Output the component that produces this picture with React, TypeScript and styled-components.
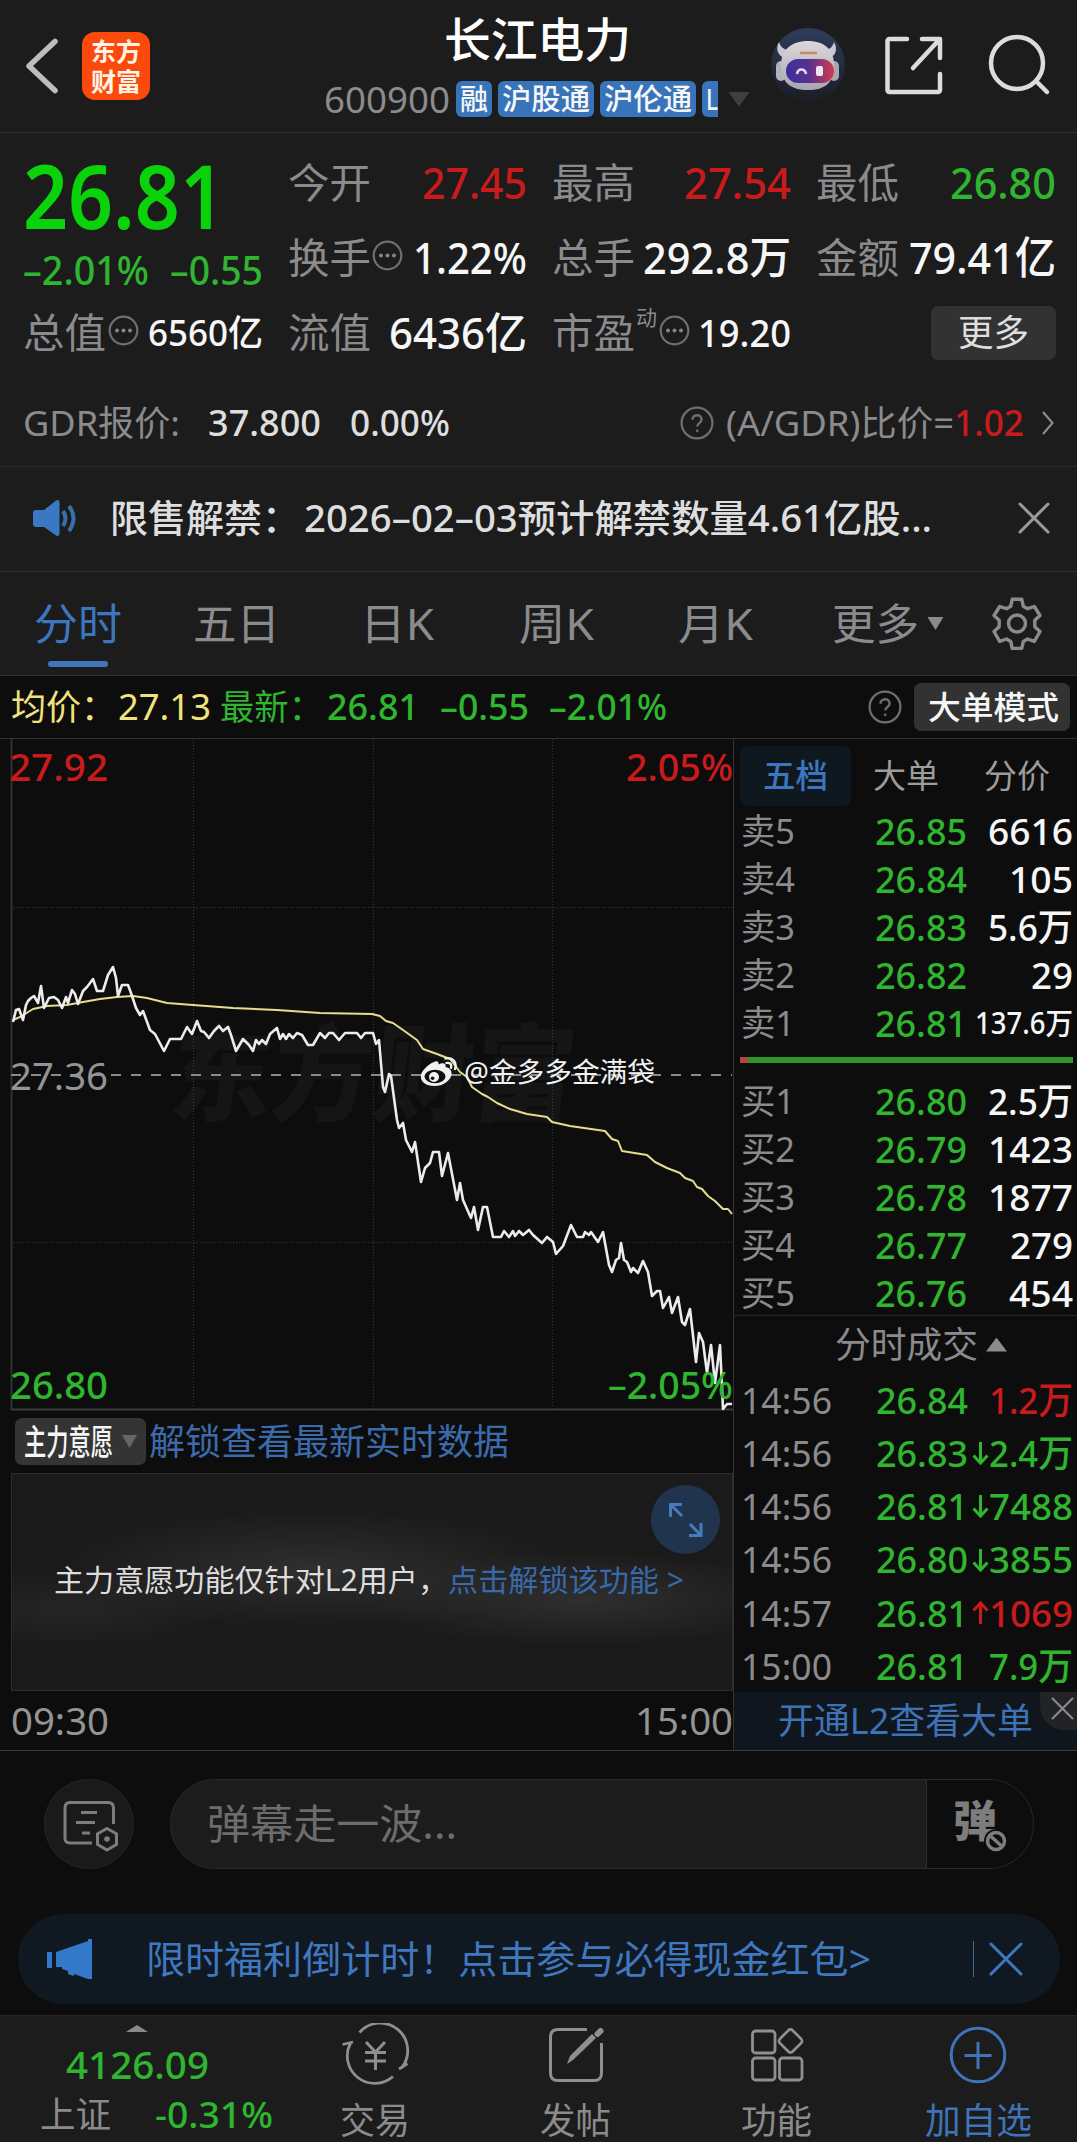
import React, { useLayoutEffect, useRef, useState } from "react";
import styled, { createGlobalStyle, css } from "styled-components";

const c = {
  panel: "#1c1c1c",
  page: "#0d0d0d",
  line: "#323232",
  grey: "#8b8b8d",
  white: "#f6f6f6",
  soft: "#dedede",
  green: "#2fb52f",
  red: "#c91a1c",
  blue: "#3c76bf",
  yellow: "#f1e27c",
};

const GlobalStyle = createGlobalStyle`
  * { box-sizing: border-box; }
  body { margin: 0; background: ${c.page}; font-family: "Noto Sans", "Noto Sans CJK SC", sans-serif; }
`;

/* ---------- text that is squeezed or stretched into its slot ---------- */
const Slot = styled.span<{ $w: number; $ml: number; $size: number; $color: string; $weight: number; $lh: number }>`
  display: block;
  flex: none;
  width: ${(p) => p.$w}px;
  margin-left: ${(p) => p.$ml}px;
  font-size: ${(p) => p.$size}px;
  line-height: ${(p) => p.$lh};
  font-weight: ${(p) => p.$weight};
  color: ${(p) => p.$color};
  white-space: pre;
`;
const Glyphs = styled.span`
  display: inline-block;
  transform-origin: 0 50%;
  vertical-align: top;
`;

type FitProps = { w: number; size: number; color?: string; ml?: number; weight?: number; lh?: number; children: React.ReactNode };
function Fit({ w, size, color = c.white, ml = 0, weight, lh = 1.2, children }: FitProps) {
  const ref = useRef<HTMLSpanElement>(null);
  const [scale, setScale] = useState(1);
  const defaultWeight = color === c.white || color === c.soft || color === c.green || color === c.red ? 500 : 400;
  useLayoutEffect(() => {
    if (ref.current) setScale(w / ref.current.getBoundingClientRect().width);
  }, []);
  return (
    <Slot $w={w} $ml={ml} $size={size} $color={color} $weight={weight ?? defaultWeight} $lh={lh}>
      <Glyphs ref={ref} style={{ transform: `scaleX(${scale})` }}>{children}</Glyphs>
    </Slot>
  );
}

/* ---------- page ---------- */
const Page = styled.main`
  width: 1077px;
  height: 2142px;
  overflow: hidden;
  background: ${c.page};
  display: flex;
  flex-direction: column;
`;

/* ---------- header ---------- */
const Header = styled.header`
  height: 133px;
  flex: none;
  background: ${c.panel};
  border-bottom: 1px solid ${c.line};
  display: grid;
  grid-template-columns: 324px 429px 1fr;
`;
const HeaderLeft = styled.div`
  display: flex;
  align-items: flex-start;
  padding: 32px 0 0 24px;
  gap: 23px;
`;
const Logo = styled.div`
  width: 68px;
  height: 68px;
  border-radius: 13px;
  background: #fb4a0b;
  color: #fff3e6;
  display: flex;
  flex-direction: column;
  align-items: center;
  justify-content: center;
  font-size: 25px;
  line-height: 30px;
  font-weight: 700;
`;
const HeaderMid = styled.div`
  display: flex;
  flex-direction: column;
  padding-top: 11px;
`;
const TitleRow = styled.div`
  height: 56px;
  padding-left: 120px;
  display: flex;
  align-items: center;
`;
const CodeRow = styled.div`
  display: flex;
  align-items: center;
  height: 64px;
`;
const Chips = styled.div`
  display: flex;
  gap: 6px;
  width: 262px;
  margin-left: 6px;
`;
const Chip = styled.span<{ $w: number; $cut?: boolean }>`
  flex: none;
  width: ${(p) => p.$w}px;
  height: 36px;
  border-radius: ${(p) => (p.$cut ? "6px 0 0 6px" : "6px")};
  background: #3874ba;
  display: flex;
  align-items: center;
  padding-left: 4px;
`;
const HeaderRight = styled.div`
  display: flex;
  align-items: flex-start;
  padding: 27px 0 0 17px;
`;
const Triangle = styled.i<{ $w: number; $h: number; $color: string; $up?: boolean; $ml?: number }>`
  flex: none;
  width: ${(p) => p.$w}px;
  height: ${(p) => p.$h}px;
  margin-left: ${(p) => p.$ml ?? 0}px;
  background: ${(p) => p.$color};
  clip-path: ${(p) => (p.$up ? "polygon(50% 0, 100% 100%, 0 100%)" : "polygon(0 0, 100% 0, 50% 100%)")};
`;

/* ---------- quote ---------- */
const Quote = styled.section`
  height: 334px;
  flex: none;
  background: ${c.panel};
  border-bottom: 1px solid #2a2a2a;
`;
const QuoteGrid = styled.div`
  display: grid;
  grid-template-columns: 263px 264px 264px 263px;
  height: 237px;
  padding: 12px 0 0 0;
`;
const QuoteCol = styled.div`
  display: grid;
  grid-template-rows: 75px 75px 75px;
`;
const PriceCol = styled.div`
  display: grid;
  grid-template-rows: 100px 50px 75px;
`;
const Line = styled.div<{ $pl?: number; $top?: number }>`
  display: flex;
  align-items: center;
  padding-left: ${(p) => p.$pl ?? 0}px;
  padding-top: ${(p) => p.$top ?? 0}px;
`;
const Grow = styled.span`
  flex: 1;
`;
const Sup = styled.span`
  align-self: flex-start;
  margin: 9px 0 0 1px;
  width: 23px;
  font-size: 21px;
  line-height: 26px;
  color: ${c.grey};
`;
const MoreButton = styled.button<{ $w: number; $h: number }>`
  border: 0;
  padding: 0;
  font-family: inherit;
  width: ${(p) => p.$w}px;
  height: ${(p) => p.$h}px;
  flex: none;
  border-radius: 7px;
  background: #323232;
  display: flex;
  align-items: center;
  justify-content: center;
`;
const GdrRow = styled.div`
  display: flex;
  align-items: center;
  height: 96px;
  padding: 9px 0 0 23px;
`;

/* ---------- notice ---------- */
const Notice = styled.section`
  height: 105px;
  flex: none;
  background: ${c.panel};
  border-bottom: 1px solid ${c.line};
  display: flex;
  align-items: center;
  padding: 0 0 2px 32px;
`;

/* ---------- period tabs ---------- */
const Tabs = styled.nav`
  height: 104px;
  flex: none;
  background: ${c.panel};
  border-bottom: 1px solid ${c.line};
  display: flex;
`;
const Tab = styled.div<{ $w: number; $active?: boolean }>`
  position: relative;
  width: ${(p) => p.$w}px;
  flex: none;
  display: flex;
  align-items: center;
  justify-content: center;
  ${(p) =>
    p.$active &&
    css`
      &::after {
        content: "";
        position: absolute;
        left: 48px;
        bottom: 8px;
        width: 60px;
        height: 6px;
        border-radius: 3px;
        background: #3f76bb;
      }
    `}
`;
const InfoBar = styled.section`
  height: 63px;
  flex: none;
  border-bottom: 1px solid ${c.line};
  display: flex;
  align-items: center;
  padding: 0 7px 0 11px;
`;

/* ---------- body ---------- */
const Body = styled.section`
  display: grid;
  grid-template-columns: 734px 343px;
  height: 1012px;
  flex: none;
  border-bottom: 1px solid #3a3a3a;
`;
const ChartSide = styled.div`
  border-right: 1px solid #333;
  display: flex;
  flex-direction: column;
`;
const ChartBox = styled.div`
  position: relative;
  height: 672px;
`;
const Over = styled.div<{ $x: number; $y: number }>`
  position: absolute;
  left: ${(p) => p.$x}px;
  top: ${(p) => p.$y}px;
  display: flex;
  align-items: center;
  height: 48px;
  margin-top: -24px;
`;
const Ghost = styled(Over)`
  transform: skewX(-6deg);
`;
const IntentBar = styled.div`
  height: 62px;
  display: flex;
  align-items: center;
  padding: 0 0 1px 15px;
`;
const IntentButton = styled.div`
  width: 131px;
  height: 47px;
  border-radius: 7px;
  background: #343434;
  display: flex;
  align-items: center;
  padding-left: 9px;
`;
const LockPanel = styled.div`
  position: relative;
  margin-left: 11px;
  height: 218px;
  border: 1px solid #2d2d2d;
  background:
    radial-gradient(ellipse 260px 60px at 300px 95px, #2f2f2f, transparent),
    radial-gradient(ellipse 230px 48px at 570px 125px, #2f2f2f, transparent),
    radial-gradient(ellipse 150px 40px at 60px 135px, #262626, transparent),
    #1a1a1a;
  display: flex;
  align-items: center;
  padding: 0 0 4px 42px;
`;
const ExpandButton = styled.div`
  position: absolute;
  right: 12px;
  top: 11px;
  width: 69px;
  height: 69px;
  border-radius: 50%;
  background: #20344e;
`;
const TimeAxis = styled.div`
  flex: 1;
  display: flex;
  align-items: center;
  justify-content: space-between;
  padding: 0 0 0 11px;
`;

/* ---------- order book ---------- */
const Book = styled.div`
  display: flex;
  flex-direction: column;
`;
const BookTabs = styled.div`
  height: 68px;
  display: flex;
  align-items: center;
  padding: 5px 0 0 6px;
`;
const BookTab = styled.div`
  width: 111px;
  height: 60px;
  border-radius: 8px;
  background: #10181f;
  display: flex;
  align-items: center;
  justify-content: center;
`;
const Row = styled.div<{ $h: number; $top?: number }>`
  height: ${(p) => p.$h}px;
  flex: none;
  display: flex;
  align-items: center;
  padding: ${(p) => p.$top ?? 0}px 4px 0 7px;
`;
const RatioBar = styled.div`
  height: 6px;
  flex: none;
  margin: 10px 4px 14px 6px;
  background: linear-gradient(90deg, #b8433c 6px, #2b962b 10px);
`;
const DealHead = styled.div`
  height: 58px;
  flex: none;
  border-top: 1px solid #262626;
  margin-top: -2px;
  display: flex;
  align-items: center;
  padding-left: 101px;
`;
const L2Bar = styled.div`
  position: relative;
  flex: 1;
  background: #10161d;
  display: flex;
  align-items: center;
  padding-left: 44px;
`;
const L2Close = styled.div`
  position: absolute;
  right: 0;
  top: 0;
  width: 37px;
  height: 38px;
  border-bottom-left-radius: 24px;
  background: #212327;
`;

/* ---------- lower area ---------- */
const Danmu = styled.section`
  height: 163px;
  flex: none;
  display: flex;
  align-items: flex-start;
  padding: 28px 0 0 44px;
  gap: 36px;
`;
const RoundButton = styled.div`
  width: 90px;
  height: 90px;
  border-radius: 50%;
  background: #1a1a1a;
  border: 1px solid #262626;
`;
const InputPill = styled.div`
  width: 864px;
  height: 90px;
  border-radius: 45px;
  border: 1px solid #2a2a2a;
  background: #1c1c1c;
  overflow: hidden;
  display: flex;
`;
const Placeholder = styled.div`
  width: 756px;
  display: flex;
  align-items: center;
  padding-left: 36px;
  border-right: 1px solid #2a2a2a;
`;
const DanmuToggle = styled.div`
  position: relative;
  flex: 1;
  background: #0d0d0d;
  padding: 15px 0 0 26px;
`;
const BanIcon = styled.svg`
  position: absolute;
  left: 57px;
  top: 49px;
`;
const Promo = styled.section`
  width: 1042px;
  height: 90px;
  flex: none;
  margin: 0 0 11px 18px;
  border-radius: 45px;
  background: #101921;
  display: flex;
  align-items: center;
  padding-left: 28px;
`;
const Rule = styled.i`
  width: 1px;
  height: 36px;
  margin-left: 102px;
  background: #47698f;
`;
const TabBar = styled.footer`
  flex: 1;
  background: #1c1c1c;
  border-top: 1px solid #262626;
  display: grid;
  grid-template-columns: 274px 201px 201px 201px 202px;
`;
const IndexCell = styled.div`
  display: flex;
  flex-direction: column;
  padding: 9px 0 0 0;
`;
const IndexLine = styled.div<{ $pl: number; $h: number }>`
  display: flex;
  align-items: center;
  height: ${(p) => p.$h}px;
  padding-left: ${(p) => p.$pl}px;
`;
const NavItem = styled.div`
  display: flex;
  flex-direction: column;
  align-items: center;
  padding-top: 7px;
  gap: 12px;
`;

/* ---------- icons ---------- */
const DotsBox = styled.svg<{ $ml: number }>`
  flex: none;
  margin: -4px 0 0 ${(p) => p.$ml}px;
`;
const Dots = ({ ml = 0 }: { ml?: number }) => (
  <DotsBox $ml={ml} width="31" height="31" viewBox="0 0 31 31">
    <circle cx="15.5" cy="15.5" r="13.8" fill="none" stroke="#6f6f71" strokeWidth="2.2" />
    <g fill="#858587"><circle cx="9" cy="15.5" r="2" /><circle cx="15.5" cy="15.5" r="2" /><circle cx="22" cy="15.5" r="2" /></g>
  </DotsBox>
);
const Icon = styled.svg<{ $ml: number }>`
  flex: none;
  margin-left: ${(p) => p.$ml}px;
`;
const Help = ({ ml }: { ml: number }) => (
  <Icon $ml={ml} width="34" height="34" viewBox="0 0 34 34" fill="none" stroke="#6f6f71" strokeWidth="2.2">
    <circle cx="17" cy="17" r="15.4" />
    <path d="M12.5 13.8c0-2.8 2-4.6 4.6-4.6s4.5 1.7 4.5 4.2c0 3.6-4.4 3.8-4.4 7.2" strokeWidth="2.4" />
    <circle cx="17.2" cy="24.8" r="1" fill="#6f6f71" strokeWidth="1" />
  </Icon>
);
const Cross = ({ size, color, w, ml = 0 }: { size: number; color: string; w: number; ml?: number }) => (
  <Icon $ml={ml} width={size} height={size} viewBox={`0 0 ${size} ${size}`} stroke={color} strokeWidth={w} strokeLinecap="round">
    <path d={`M2 2L${size - 2} ${size - 2}M${size - 2} 2L2 ${size - 2}`} />
  </Icon>
);
const Robot = () => (
  <svg width="76" height="76" viewBox="0 0 76 76">
    <defs>
      <linearGradient id="halo" x1="0" y1="0" x2="0" y2="1"><stop offset="0" stopColor="#303c5c" /><stop offset=".55" stopColor="#222a3d" /><stop offset="1" stopColor="#1b1d24" /></linearGradient>
      <linearGradient id="visor"><stop offset="0" stopColor="#3a2f9c" /><stop offset=".5" stopColor="#5b318f" /><stop offset="1" stopColor="#d23a4c" /></linearGradient>
      <linearGradient id="head" x1="0" y1="0" x2="0" y2="1"><stop offset="0" stopColor="#dcd8da" /><stop offset="1" stopColor="#a9a6b0" /></linearGradient>
    </defs>
    <circle cx="38" cy="38" r="37" fill="url(#halo)" />
    <path d="M9 15c-4 7-1 14 7 17l8-9c-7 1-13-1-15-8zM64 15c4 7 2 14-6 17l-8-9c7 1 12-1 14-8z" fill="#c9c7cf" />
    <rect x="6" y="34" width="10" height="20" rx="5" fill="#b3b1bb" />
    <rect x="59" y="34" width="10" height="20" rx="5" fill="#a9a6b0" />
    <path d="M38 14c17 0 26 9 26 24 0 18-9 25-26 25S11 56 11 38c0-15 10-24 27-24z" fill="url(#head)" />
    <rect x="16" y="32" width="48" height="24" rx="12" fill="url(#visor)" />
    <path d="M27 47c1-6 8-6 9 0" fill="none" stroke="#e5dcf5" strokeWidth="2.500" />
    <rect x="46" y="39" width="7" height="10" rx="2" fill="#f0e3f0" />
    <path d="M30 26h17" stroke="#c4896b" strokeWidth="2.500" />
  </svg>
);

const pricePoints =
  "13,1022 16,1010 19,1009 23,1020 26,1005 28,1001 31,998 34,996 38,1003 41,986 44,1008 49,998 54,997 58,1000 62,1008 66,997 68,1003 72,990 75,994 78,1004 83,991 87,987 93,979 97,991 103,991 108,975 113,967 116,978 118,996 122,985 128,985 131,993 136,1008 140,1015 143,1011 150,1030 155,1034 164,1051 170,1039 181,1039 187,1027 192,1034 197,1021 201,1031 204,1032 209,1038 214,1031 219,1026 223,1031 228,1027 231,1035 236,1051 243,1039 249,1045 253,1051 256,1040 259,1044 262,1040 266,1044 270,1034 277,1028 280,1039 283,1034 286,1039 289,1034 293,1038 297,1033 302,1035 308,1045 313,1045 320,1033 325,1038 329,1033 333,1033 339,1040 345,1033 357,1033 361,1038 365,1033 373,1033 376,1044 379,1040 383,1087 385,1092 389,1074 391,1076 397,1120 399,1128 403,1123 406,1140 412,1152 415,1142 421,1182 425,1168 430,1163 433,1152 439,1152 442,1176 448,1153 457,1200 460,1183 463,1200 471,1218 474,1207 478,1230 483,1207 487,1207 493,1237 501,1237 504,1231 509,1237 513,1231 515,1236 519,1231 523,1235 529,1230 533,1235 542,1243 547,1237 553,1242 556,1254 563,1246 571,1225 577,1237 583,1237 585,1232 589,1235 591,1232 598,1242 603,1232 609,1265 612,1272 616,1260 619,1258 621,1243 624,1260 627,1262 631,1272 633,1268 638,1273 643,1261 648,1272 652,1296 657,1291 660,1291 663,1308 669,1297 672,1313 678,1297 682,1322 685,1325 690,1309 696,1362 699,1333 703,1342 707,1373 711,1345 715,1383 720,1345 723,1409 727,1404 732,1404";
const averagePoints =
  "13,1020 20,1017 25,1014 33,1009 47,1006 67,1005 83,1002 100,999 117,997 133,996 147,998 167,1003 193,1005 233,1008 277,1010 320,1013 372,1014 380,1016 386,1021 393,1023 403,1030 417,1040 423,1049 437,1054 450,1059 460,1072 467,1077 472,1087 482,1094 488,1097 497,1103 510,1109 527,1114 547,1117 552,1122 570,1126 605,1131 612,1139 618,1141 622,1151 647,1155 655,1162 667,1168 680,1173 685,1178 693,1181 697,1187 702,1189 708,1196 715,1201 723,1209 728,1209 732,1214";

const Plot = styled.svg`
  position: relative;
  display: block;
`;
const Chart = () => (
  <Plot width="733" height="672" viewBox="0 739 733 672" fill="none">
    <path d="M11.500 739V1410" stroke="#303030" strokeWidth="2" />
    <path d="M11 1409.500H733" stroke="#3c3c3c" strokeWidth="2" />
    <path d="M193.500 739V1410M373.500 739V1410M552.500 739V1410M11 907.500H733M11 1242.500H733" stroke="#3a3a3a" strokeDasharray="1 2" />
    <path d="M11 1075H732" stroke="#8a8a8a" strokeWidth="2" strokeDasharray="10 10" />
    <polyline points={averagePoints} stroke="#e6dd8e" strokeWidth="2" strokeLinejoin="round" />
    <polyline points={pricePoints} stroke="#ececec" strokeWidth="2.600" strokeLinejoin="round" />
  </Plot>
);

const Weibo = () => (
  <svg width="38" height="32" viewBox="0 0 38 32">
    <path d="M14 6c3-1.500 5-.5 4.500 2.500 4-2 8-1.500 7 2.500 5 1 6.500 4 6 8C30 25 23 30 14.500 30 6 30 .8 26 .8 20.500.8 15 8 8.500 14 6z" fill="#f2f2f2" />
    <ellipse cx="15" cy="20.500" rx="10.500" ry="6.800" fill="#111" />
    <circle cx="14" cy="21" r="5" fill="#f2f2f2" />
    <circle cx="12.600" cy="22.300" r="1.800" fill="#111" />
    <path d="M25.500 2.500c7-2 12 4 9.500 10.500M26.500 7c3.500-.8 5.500 1.500 4.500 4.800" fill="none" stroke="#f2f2f2" strokeWidth="2.300" strokeLinecap="round" />
  </svg>
);

/* ---------- data ---------- */
type Level = [label: string, price: string, volume: string, width: number, size?: number];
const asks: Level[] = [
  ["卖5", "26.85", "6616", 85], ["卖4", "26.84", "105", 64], ["卖3", "26.83", "5.6万", 85],
  ["卖2", "26.82", "29", 42], ["卖1", "26.81", "137.6万", 98, 30],
];
const bids: Level[] = [
  ["买1", "26.80", "2.5万", 85], ["买2", "26.79", "1423", 85], ["买3", "26.78", "1877", 85],
  ["买4", "26.77", "279", 63], ["买5", "26.76", "454", 64],
];
type Deal = [time: string, price: string, dir: "" | "up" | "down", volume: string, color: string];
const deals: Deal[] = [
  ["14:56", "26.84", "", "1.2万", c.red],
  ["14:56", "26.83", "down", "2.4万", c.green],
  ["14:56", "26.81", "down", "7488", c.green],
  ["14:56", "26.80", "down", "3855", c.green],
  ["14:57", "26.81", "up", "1069", c.red],
  ["15:00", "26.81", "", "7.9万", c.green],
];

const LevelRow = ({ level: [label, price, volume, width, size = 37] }: { level: Level }) => (
  <Row $h={48}>
    <Fit w={54} size={35} color={c.grey}>{label}</Fit>
    <Fit w={92} size={37} color={c.green} ml={80}>{price}</Fit>
    <Grow />
    <Fit w={width} size={size}>{volume}</Fit>
  </Row>
);

export default function App() {
  return (
    <Page>
      <GlobalStyle />
      <Header>
        <HeaderLeft>
          <svg width="35" height="68" viewBox="0 0 35 68" fill="none" stroke="#bdbdbd" strokeWidth="5.500" strokeLinecap="round" strokeLinejoin="round">
            <path d="M31 9.500L5 34L31 58.500" />
          </svg>
          <Logo><span>东方</span><span>财富</span></Logo>
        </HeaderLeft>
        <HeaderMid>
          <TitleRow><Fit w={187} size={47} color="#fff" weight={500}>长江电力</Fit></TitleRow>
          <CodeRow>
            <Fit w={126} size={37} color={c.grey}>600900</Fit>
            <Chips>
              <Chip $w={36}><Fit w={28} size={29}>融</Fit></Chip>
              <Chip $w={96}><Fit w={88} size={29}>沪股通</Fit></Chip>
              <Chip $w={96}><Fit w={88} size={29}>沪伦通</Fit></Chip>
              <Chip $w={16} $cut><Fit w={12} size={29}>L</Fit></Chip>
            </Chips>
            <Triangle $w={22} $h={15} $color="#3f3f3f" $ml={10} />
          </CodeRow>
        </HeaderMid>
        <HeaderRight>
          <Robot />
          <Icon $ml={38} width="60" height="76" viewBox="0 0 60 76" fill="none" stroke="#dcdcdc" strokeWidth="4.500" strokeLinecap="round" strokeLinejoin="round">
            <path d="M23 12H5.500a2 2 0 0 0-2 2V63a2 2 0 0 0 2 2H54a2 2 0 0 0 2-2V47M38 12H56V31M55 13L29 41" />
          </Icon>
          <Icon $ml={44} width="64" height="76" viewBox="0 0 64 76" fill="none" stroke="#dcdcdc" strokeWidth="4.500" strokeLinecap="round">
            <circle cx="29" cy="36" r="26" /><path d="M48 54L59 65" />
          </Icon>
        </HeaderRight>
      </Header>

      <Quote>
        <QuoteGrid>
          <PriceCol>
            <Line $pl={23}><Fit w={202} size={88} color="#0bd30b" weight={600} lh={1}>26.81</Fit></Line>
            <Line $pl={23} $top={1}>
              <Fit w={126} size={39} color={c.green}>–2.01%</Fit>
              <Fit w={93} size={39} color={c.green} ml={21}>–0.55</Fit>
            </Line>
            <Line $pl={23}>
              <Fit w={83} size={41} color={c.grey}>总值</Fit><Dots ml={2} />
              <Fit w={115} size={36} ml={9}>6560亿</Fit>
            </Line>
          </PriceCol>
          <QuoteCol>
            <Line $pl={25}><Fit w={83} size={41} color={c.grey}>今开</Fit><Grow /><Fit w={105} size={43} color={c.red}>27.45</Fit></Line>
            <Line $pl={25}><Fit w={83} size={41} color={c.grey}>换手</Fit><Dots ml={1} /><Grow /><Fit w={114} size={44}>1.22%</Fit></Line>
            <Line $pl={25}><Fit w={83} size={41} color={c.grey}>流值</Fit><Grow /><Fit w={138} size={43}>6436亿</Fit></Line>
          </QuoteCol>
          <QuoteCol>
            <Line $pl={25}><Fit w={83} size={41} color={c.grey}>最高</Fit><Grow /><Fit w={107} size={43} color={c.red}>27.54</Fit></Line>
            <Line $pl={25}><Fit w={83} size={41} color={c.grey}>总手</Fit><Grow /><Fit w={148} size={44}>292.8万</Fit></Line>
            <Line $pl={25}><Fit w={83} size={41} color={c.grey}>市盈</Fit><Sup>动</Sup><Dots /><Grow /><Fit w={93} size={38}>19.20</Fit></Line>
          </QuoteCol>
          <QuoteCol>
            <Line $pl={25}><Fit w={83} size={41} color={c.grey}>最低</Fit><Grow /><Fit w={106} size={43} color={c.green}>26.80</Fit></Line>
            <Line $pl={25}><Fit w={83} size={41} color={c.grey}>金额</Fit><Grow /><Fit w={147} size={44}>79.41亿</Fit></Line>
            <Line $pl={140}><MoreButton $w={125} $h={54}><Fit w={71} size={36} color={c.soft} weight={400}>更多</Fit></MoreButton></Line>
          </QuoteCol>
        </QuoteGrid>
        <GdrRow>
          <Fit w={157} size={35} color={c.grey}>GDR报价:</Fit>
          <Fit w={113} size={36} color={c.soft} ml={28}>37.800</Fit>
          <Fit w={100} size={36} color={c.soft} ml={29}>0.00%</Fit>
          <Help ml={230} />
          <Fit w={228} size={35} color={c.grey} ml={12}>(A/GDR)比价=</Fit>
          <Fit w={70} size={36} color={c.red}>1.02</Fit>
          <Icon $ml={17} width="14" height="26" viewBox="0 0 14 26" fill="none" stroke="#8b8b8d" strokeWidth="2.200"><path d="M2 2L11.500 13L2 24" /></Icon>
        </GdrRow>
      </Quote>

      <Notice>
        <svg width="48" height="40" viewBox="0 0 48 40" fill="#3a78c4">
          <path d="M4 12H12L24 2.500Q27 1 27.500 4V36Q27 39 24 37.500L12 29H4Q1 29 1 26V15Q1 12 4 12z" />
          <path d="M31 13Q36 20 31 28M37 8Q46 20 37 33" fill="none" stroke="#3a6fae" strokeWidth="4" />
        </svg>
        <Fit w={190} size={38} color={c.soft} ml={30}>限售解禁：</Fit>
        <Fit w={628} size={38} color={c.soft} ml={4}>2026–02–03预计解禁数量4.61亿股...</Fit>
        <Cross size={32} color="#9a9a9a" w={3} ml={86} />
      </Notice>

      <Tabs>
        <Tab $w={156} $active><Fit w={88} size={43} color={c.blue}>分时</Fit></Tab>
        <Tab $w={160}><Fit w={87} size={43} color={c.grey}>五日</Fit></Tab>
        <Tab $w={162}><Fit w={74} size={43} color={c.grey}>日K</Fit></Tab>
        <Tab $w={157}><Fit w={75} size={43} color={c.grey}>周K</Fit></Tab>
        <Tab $w={161}><Fit w={75} size={43} color={c.grey}>月K</Fit></Tab>
        <Tab $w={183}>
          <Fit w={87} size={43} color={c.grey}>更多</Fit><Triangle $w={16} $h={13} $color={c.grey} $ml={9} />
        </Tab>
        <Icon $ml={10} width="56" height="103" viewBox="0 0 56 103" fill="none" stroke={c.grey} strokeWidth="3.400" strokeLinejoin="round">
          <path d="M23.200 27.300H32.800L34.300 34.300L38.500 36.700L45.300 34.500L51 43.500L45.800 48.300V54.700L51 59.500L45.300 69.300L38.500 67L34.300 69.400L32.800 76.400H23.200L21.700 69.400L17.500 67L10.700 69.300L5 59.500L10.200 54.700V48.300L5 43.500L10.700 34.500L17.500 36.700L21.700 34.300Z" />
          <circle cx="28" cy="51.500" r="8.500" />
        </Icon>
      </Tabs>

      <InfoBar>
        <Fit w={105} size={35} color={c.yellow}>均价：</Fit>
        <Fit w={93} size={36} color={c.yellow} ml={2}>27.13</Fit>
        <Fit w={103} size={35} color={c.green} ml={9} weight={400}>最新：</Fit>
        <Fit w={92} size={36} color={c.green} ml={4}>26.81</Fit>
        <Fit w={89} size={36} color={c.green} ml={21}>–0.55</Fit>
        <Fit w={118} size={36} color={c.green} ml={20}>–2.01%</Fit>
        <Help ml={201} />
        <Grow />
        <MoreButton $w={156} $h={48}><Fit w={131} size={32}>大单模式</Fit></MoreButton>
      </InfoBar>

      <Body>
        <ChartSide>
          <ChartBox>
            <Ghost $x={172} $y={334}><Fit w={416} size={106} color="#151515" weight={900}>东方财富</Fit></Ghost>
            <Chart />
            <Over $x={9} $y={28}><Fit w={99} size={38} color={c.red}>27.92</Fit></Over>
            <Over $x={626} $y={28}><Fit w={107} size={38} color={c.red}>2.05%</Fit></Over>
            <Over $x={10} $y={336}><Fit w={98} size={39} color="#949494">27.36</Fit></Over>
            <Over $x={10} $y={646}><Fit w={98} size={38} color={c.green}>26.80</Fit></Over>
            <Over $x={608} $y={646}><Fit w={125} size={38} color={c.green}>–2.05%</Fit></Over>
            <Over $x={420} $y={333}><Weibo /><Fit w={191} size={27} color="#f2f2f2" ml={6}>@金多多金满袋</Fit></Over>
          </ChartBox>
          <IntentBar>
            <IntentButton><Fit w={89} size={35}>主力意愿</Fit><Triangle $w={15} $h={13} $color="#666" $ml={9} /></IntentButton>
            <Fit w={360} size={36} color="#3b6bab" ml={3}>解锁查看最新实时数据</Fit>
          </IntentBar>
          <LockPanel>
            <Fit w={394} size={30} color="#ddd">主力意愿功能仅针对L2用户，</Fit>
            <Fit w={236} size={30} color="#386aab">{"点击解锁该功能 >"}</Fit>
            <ExpandButton>
              <svg width="69" height="69" viewBox="0 0 69 69" fill="none" stroke="#447bbd" strokeWidth="3">
                <path d="M31 19.500H19.500V32M19.500 19.500L31 31M50 38V50.500H38M50 50.500L39 39" />
              </svg>
            </ExpandButton>
          </LockPanel>
          <TimeAxis>
            <Fit w={98} size={38} color="#949494">09:30</Fit>
            <Fit w={98} size={38} color="#949494">15:00</Fit>
          </TimeAxis>
        </ChartSide>

        <Book>
          <BookTabs>
            <BookTab><Fit w={65} size={33} color={c.blue} weight={500}>五档</Fit></BookTab>
            <Fit w={66} size={33} color="#9c9c9c" ml={22}>大单</Fit>
            <Fit w={66} size={33} color="#9c9c9c" ml={45}>分价</Fit>
          </BookTabs>
          {asks.map((level) => <LevelRow key={level[0]} level={level} />)}
          <RatioBar />
          {bids.map((level) => <LevelRow key={level[0]} level={level} />)}
          <DealHead>
            <Fit w={143} size={36} color={c.grey}>分时成交</Fit>
            <Triangle $w={21} $h={14} $color={c.grey} $up $ml={8} />
          </DealHead>
          {deals.map(([time, price, dir, volume, color], i) => (
            <Row key={i} $h={53.2} $top={1}>
              <Fit w={91} size={37} color={c.grey}>{time}</Fit>
              <Fit w={92} size={37} color={c.green} ml={44}>{price}</Fit>
              <Grow />
              {dir && (
                <svg width="17" height="26" viewBox="0 0 17 26" fill="none" stroke={color} strokeWidth="3">
                  <path d={dir === "down" ? "M8.500 2V23M1.500 15.500L8.500 23L15.500 15.500" : "M8.500 24V3M1.500 10.500L8.500 3L15.500 10.500"} />
                </svg>
              )}
              <Fit w={84} size={37} color={color}>{volume}</Fit>
            </Row>
          ))}
          <L2Bar>
            <Fit w={255} size={36} color="#3f72b5">开通L2查看大单</Fit>
            <L2Close>
              <svg width="37" height="38" viewBox="0 0 37 38" stroke="#8a8a8c" strokeWidth="2.200"><path d="M12 6L33 27M33 6L12 27" /></svg>
            </L2Close>
          </L2Bar>
        </Book>
      </Body>

      <Danmu>
        <RoundButton>
          <svg width="88" height="88" viewBox="45 1780 88 88" fill="none" stroke="#7d7d7d" strokeWidth="3">
            <path d="M92 1843H70Q65 1843 65 1838V1808Q65 1802.500 70 1802.500H108Q113.500 1802.500 113.500 1808V1824M81 1812.500H97M76 1822.500H95M82 1833H90" />
            <path d="M107 1828.500L116.500 1833.800V1844.500L107 1850L97.500 1844.500V1833.800Z" />
            <circle cx="107" cy="1839" r="2.800" fill="#7d7d7d" stroke="none" />
          </svg>
        </RoundButton>
        <InputPill>
          <Placeholder><Fit w={250} size={41} color="#6c6c6c">弹幕走一波...</Fit></Placeholder>
          <DanmuToggle>
            <Fit w={44} size={43} color="#7d7d7d" weight={900}>弹</Fit>
            <BanIcon width="24" height="24" viewBox="0 0 24 24" fill="#0d0d0d" stroke="#7d7d7d" strokeWidth="3.500">
              <circle cx="12" cy="12" r="12" stroke="none" /><circle cx="12" cy="12" r="8.500" /><path d="M6.500 7L17.500 17" />
            </BanIcon>
          </DanmuToggle>
        </InputPill>
      </Danmu>

      <Promo>
        <svg width="48" height="42" viewBox="0 0 48 42" fill="#3478c9">
          <path d="M1 14H6V30H1zM10 14L42 3V1H46V41H42L28 36V38L22 36V33L16 31V29H10z" />
        </svg>
        <Fit w={725} size={38} color="#4078c0" ml={52}>{"限时福利倒计时！点击参与必得现金红包>"}</Fit>
        <Rule />
        <Cross size={34} color="#4078c0" w={3} ml={15} />
      </Promo>

      <TabBar>
        <IndexCell>
          <Triangle $w={22} $h={7} $color="#8a8a8a" $up $ml={126} />
          <IndexLine $pl={66} $h={66}><Fit w={143} size={38} color={c.green}>4126.09</Fit></IndexLine>
          <IndexLine $pl={40} $h={33}>
            <Fit w={71} size={36} color={c.grey}>上证</Fit><Fit w={118} size={36} color={c.green} ml={44}>-0.31%</Fit>
          </IndexLine>
        </IndexCell>
        <NavItem>
          <svg width="68" height="64" viewBox="340 2023 68 64" fill="none" stroke="#8f8f8f" strokeWidth="2.800">
            <path d="M358.500 2032.500A27.500 27.500 0 0 1 400.500 2068M392 2076.500A27.500 27.500 0 0 1 349.500 2043M341.500 2044.500L352 2042M398 2069L406.500 2063.500" />
            <path d="M365 2042L374.500 2052L384 2042M374.500 2052V2070M364 2052.500H385M364 2061H385" strokeWidth="3" />
          </svg>
          <Fit w={70} size={36} color={c.grey}>交易</Fit>
        </NavItem>
        <NavItem>
          <svg width="64" height="64" viewBox="544 2023 64 64" fill="none" stroke="#8f8f8f" strokeWidth="3">
            <path d="M587 2029.500H558Q550.500 2029.500 550.500 2037V2073Q550.500 2080.500 558 2080.500H594Q601.500 2080.500 601.500 2073V2043" />
            <path d="M567 2064L570 2056L592 2034L596 2038L573 2060Z" fill="#8f8f8f" stroke="none" />
            <path d="M597.500 2034L600.500 2031" strokeWidth="6" strokeLinecap="round" />
          </svg>
          <Fit w={71} size={36} color={c.grey}>发帖</Fit>
        </NavItem>
        <NavItem>
          <svg width="64" height="64" viewBox="745 2023 64 64" fill="none" stroke="#8f8f8f" strokeWidth="2.800">
            <rect x="752.500" y="2031" width="22.500" height="22" rx="3" />
            <rect x="752.500" y="2058" width="22.500" height="22" rx="3" />
            <rect x="779.500" y="2058" width="22.500" height="22" rx="3" />
            <rect x="781.500" y="2032" width="18" height="18" rx="3" transform="rotate(45 790.500 2041)" />
          </svg>
          <Fit w={71} size={36} color={c.grey}>功能</Fit>
        </NavItem>
        <NavItem>
          <svg width="64" height="64" viewBox="946 2023 64 64" fill="none" stroke="#3f74b8" strokeWidth="3">
            <circle cx="978" cy="2055" r="26.800" /><path d="M978 2042V2069M964.500 2055.500H991.500" />
          </svg>
          <Fit w={107} size={36} color="#3f74b8">加自选</Fit>
        </NavItem>
      </TabBar>
    </Page>
  );
}
